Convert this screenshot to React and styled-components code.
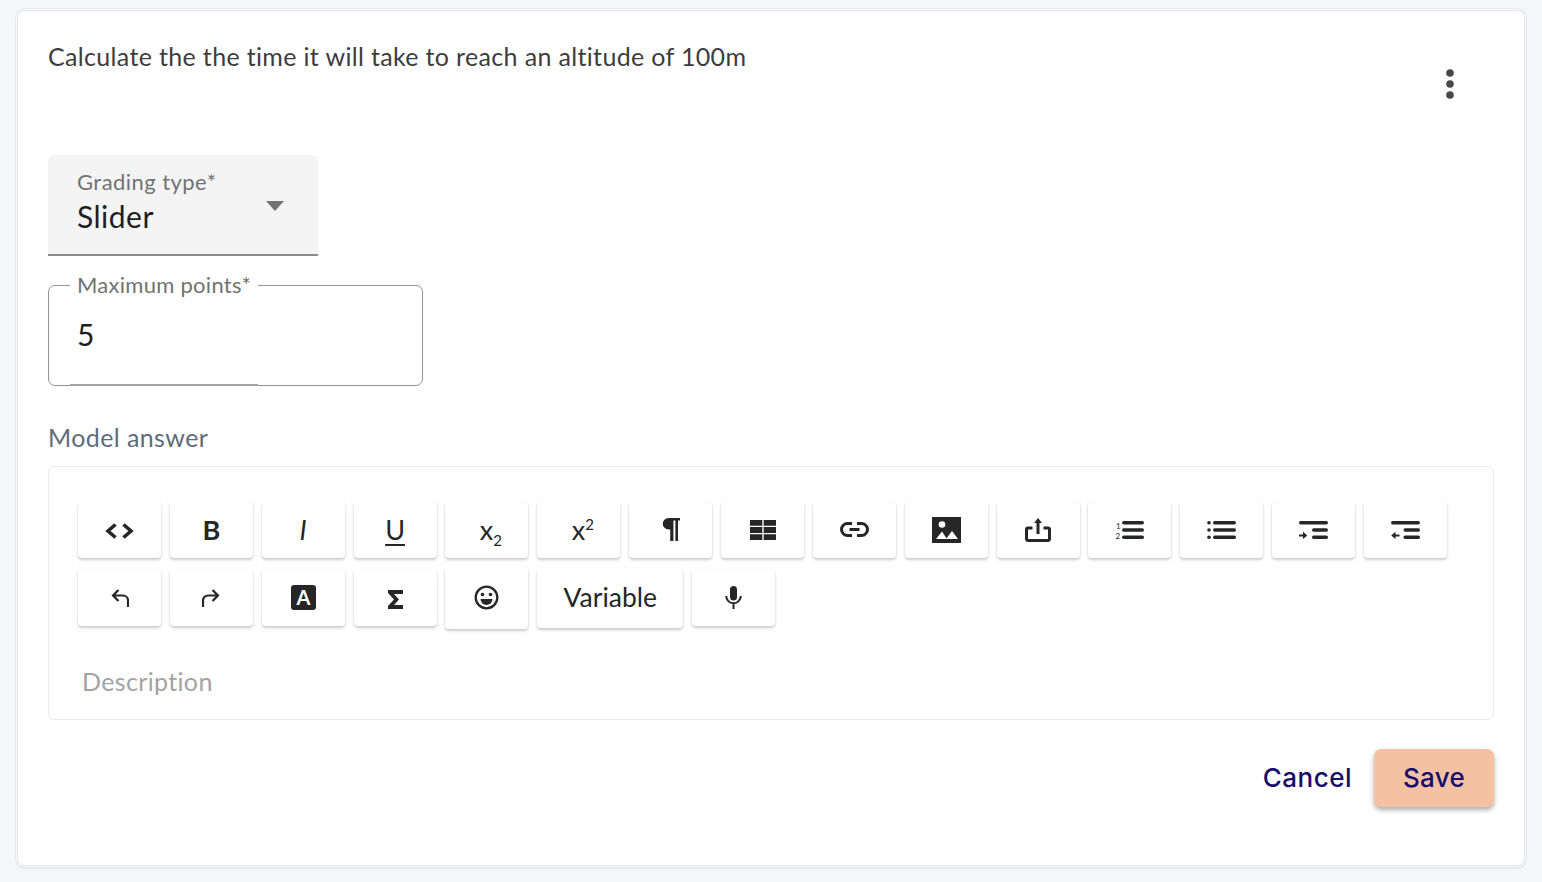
import styled, { createGlobalStyle } from "styled-components";

const GlobalStyle = createGlobalStyle`
  html, body {
    margin: 0;
    background: #f5f6f9;
    font-family: "Lato", "Noto Sans", sans-serif;
    font-variant-ligatures: none;
  }
  * {
    box-sizing: border-box;
  }
`;

const Page = styled.div`
  min-height: 100vh;
  padding: 10px 17px 16px;
`;
const Card = styled.div`
  height: 856px;
  padding: 29px 30px 0;
  background: #fff;
  border: 1px solid #e4e6ea;
  border-radius: 8px;
  box-shadow: 0 0 0 1px #f9f9fb, 0 0 0 2px #e6e8ec, 0 2px 2px 1px rgba(0, 0, 0, 0.08);
`;
const Header = styled.div`
  display: flex;
  justify-content: space-between;
  height: 115px;
`;
const Title = styled.div`
  margin-top: -2px;
  font-size: 25px;
  line-height: 36px;
  letter-spacing: 0.34px;
  color: #3d3d3d;
`;
const MenuButton = styled.button`
  width: 48px;
  height: 48px;
  margin: 20px 20px 0 0;
  padding: 0;
  display: flex;
  align-items: center;
  justify-content: center;
  background: none;
  border: none;
`;
const SelectBox = styled.div`
  position: relative;
  width: 270px;
  height: 101px;
  padding: 14px 29px 0;
  background: #f4f4f4;
  border-bottom: 2px solid #8c8c8c;
  border-radius: 6px 6px 0 0;
`;
const SelectLabel = styled.div`
  font-size: 22px;
  line-height: 26px;
  letter-spacing: 0.45px;
  color: #727272;
`;
const SelectValue = styled.div`
  margin-top: 1px;
  font-size: 30px;
  line-height: 40px;
  letter-spacing: 0.5px;
  color: #1e1e1e;
`;
const Caret = styled.span`
  position: absolute;
  top: 46px;
  right: 34px;
  width: 0;
  height: 0;
  border-left: 9.5px solid transparent;
  border-right: 9.5px solid transparent;
  border-top: 10px solid #737373;
`;
const PointsField = styled.fieldset`
  position: relative;
  width: 375px;
  height: 111px;
  margin: 19px 0 0;
  padding: 0 28px;
  border: 1px solid #939393;
  border-radius: 7px;

  &::after {
    content: "";
    position: absolute;
    left: 21px;
    bottom: -1px;
    width: 188px;
    height: 2px;
    background: #a4a4a4;
  }
`;
const PointsLegend = styled.legend`
  margin-left: -7px;
  padding: 0 7px;
  font-size: 22px;
  line-height: 20px;
  letter-spacing: 0.27px;
  color: #727272;
`;
const PointsValue = styled.div`
  margin-top: 19px;
  font-size: 30px;
  line-height: 40px;
  color: #1e1e1e;
`;
const SectionLabel = styled.div`
  margin: 36px 0 14px;
  font-size: 25px;
  line-height: 30px;
  letter-spacing: 0.4px;
  color: #5f6b7a;
`;
const Editor = styled.div`
  height: 254px;
  padding: 34px 29px 0;
  border: 1px solid #e9ebee;
  border-radius: 6px;
`;
const Toolbar = styled.div`
  display: flex;
  flex-direction: column;
  gap: 8px;
`;
const ToolRow = styled.div`
  display: flex;
  align-items: center;
  gap: 8.86px;
  height: ${(p) => p.$height}px;
`;
const ToolButton = styled.button`
  flex: none;
  width: ${(p) => p.$width || 83}px;
  height: ${(p) => p.$height || 57}px;
  padding: 0;
  display: flex;
  align-items: center;
  justify-content: center;
  background: #fff;
  border: none;
  border-radius: 4px;
  color: #262626;
  font-family: "Lato", sans-serif;
  box-shadow: 0 2px 3px rgba(0, 0, 0, 0.2), 0 0 2px rgba(0, 0, 0, 0.05);
`;
const Glyph = styled.span`
  margin-left: ${(p) => p.$shift || 0}px;
  font-size: 27px;
  line-height: 1;
  font-weight: ${(p) => (p.$bold ? 700 : 400)};
  font-style: ${(p) => (p.$italic ? "italic" : "normal")};
  text-decoration: ${(p) => (p.$underline ? "underline" : "none")};
  text-decoration-thickness: 2px;
  text-underline-offset: 4px;

  sub, sup {
    font-size: 15px;
    line-height: 0;
  }
`;
const VariableText = styled.span`
  margin-top: -2px;
  font-size: 26.5px;
`;
const Description = styled.div`
  margin: 37px 0 0 4px;
  font-size: 25px;
  line-height: 30px;
  letter-spacing: 0.35px;
  color: #a3a3a3;
`;
const Footer = styled.div`
  display: flex;
  justify-content: flex-end;
  align-items: center;
  gap: 22px;
  margin-top: 29px;
`;
const CancelButton = styled.button`
  margin-top: -2px;
  padding: 0;
  background: none;
  border: none;
  font-family: "Inter", sans-serif;
  font-size: 26px;
  font-weight: 500;
  letter-spacing: 0.5px;
  color: #170b6b;
`;
const SaveButton = styled.button`
  width: 120px;
  height: 58px;
  padding: 0 0 2px;
  background: #f4c1a3;
  border: none;
  border-radius: 7px;
  font-family: "Inter", sans-serif;
  font-size: 26px;
  font-weight: 500;
  letter-spacing: 0.3px;
  color: #170b6b;
  box-shadow: 0 3px 5px rgba(0, 0, 0, 0.32);
`;

const ink = "#262626";

const CodeIcon = () => (
  <svg width="29" height="16" viewBox="0 0 29 16" fill="none" stroke={ink} strokeWidth="3.6" style={{ marginTop: 2 }}>
    <path d="M10.500 1.500 3 8l7.500 6.500M18.500 1.500 26 8l-7.500 6.500" />
  </svg>
);
const UndoIcon = () => (
  <svg width="18" height="18" viewBox="0 0 18 18" fill="none" stroke={ink} strokeWidth="2.2">
    <path d="M7.5 1 2 6.5 7.5 12M2 6.5h10a5 5 0 0 1 5 5V18" />
  </svg>
);
const RedoIcon = () => (
  <svg width="18" height="18" viewBox="0 0 18 18" fill="none" stroke={ink} strokeWidth="2.2">
    <path d="M10.5 1 16 6.5 10.5 12M16 6.5H6a5 5 0 0 0-5 5V18" />
  </svg>
);
const FontBoxIcon = () => (
  <svg width="25" height="25" viewBox="0 0 25 25">
    <rect width="25" height="25" rx="3" fill={ink} />
    <text x="12.5" y="20" textAnchor="middle" fontFamily="Lato" fontWeight="700" fontSize="20" fill="#fff">A</text>
  </svg>
);
const SigmaIcon = () => (
  <svg width="15" height="19" viewBox="0 0 15 19" fill={ink} style={{ marginTop: 3 }}>
    <path d="M0 0h15v4H6l5 5.5L6 15h9v4H0v-3l6-6.5L0 3z" />
  </svg>
);
const SmileIcon = () => (
  <svg width="25" height="25" viewBox="0 0 25 25" fill="none">
    <circle cx="12.5" cy="12.5" r="10.8" stroke={ink} strokeWidth="2.3" />
    <circle cx="8.5" cy="9.5" r="1.8" fill={ink} />
    <circle cx="16.5" cy="9.5" r="1.8" fill={ink} />
    <path d="M6.5 14h12a6 6 0 0 1-12 0z" fill={ink} />
  </svg>
);
const MicIcon = () => (
  <svg width="17" height="23" viewBox="0 0 17 23" fill="none" stroke={ink} strokeWidth="2">
    <rect x="5" width="7" height="14.5" rx="3.5" fill={ink} stroke="none" />
    <path d="M1.2 10a7.3 7.3 0 0 0 14.6 0M8.5 17.5V23" />
  </svg>
);
const ParagraphIcon = () => (
  <svg width="18" height="23" viewBox="0 0 18 23" fill={ink}>
    <path d="M6.5 0H18v2.6h-2V23h-2.6V2.6h-2V23H8.2V11.5h-1.7a5.75 5.75 0 0 1 0-11.5z" />
  </svg>
);
const TableIcon = () => (
  <svg width="26" height="20" viewBox="0 0 26 20" fill={ink}>
    <path d="M0 0h12.3v5.7H0zM13.7 0H26v5.7H13.7zM0 7.1h12.3v5.8H0zM13.7 7.1H26v5.8H13.7zM0 14.3h12.3V20H0zM13.7 14.3H26V20H13.7z" />
  </svg>
);
const LinkIcon = () => (
  <svg width="29" height="15" viewBox="0 0 29 15" fill="none" stroke={ink} strokeWidth="3">
    <path d="M12 1.5H7.5a6 6 0 0 0 0 12H12M17 1.5h4.5a6 6 0 0 1 0 12H17M9.5 7.5h10" />
  </svg>
);
const ImageIcon = () => (
  <svg width="29" height="26" viewBox="0 0 29 26">
    <rect width="29" height="26" fill={ink} />
    <circle cx="10" cy="7.5" r="3.3" fill="#fff" />
    <path d="M4 22l6-7.5 5 7.5zM14 22l6-8 6 8z" fill="#fff" />
  </svg>
);
const ShareIcon = () => (
  <svg width="26" height="24" viewBox="0 0 26 24" fill="none" stroke={ink} strokeWidth="3">
    <path d="M7.5 10H3a1.5 1.5 0 0 0-1.5 1.5v9A2 2 0 0 0 3.5 22.500h19a2 2 0 0 0 2-2v-9A1.5 1.500 0 0 0 23 10h-4.500M13 4v12" />
    <path d="M13 0l4 5H9z" fill={ink} stroke="none" />
  </svg>
);
const Bars = ({ rows }) =>
  rows.map(([x, y, w]) => <rect key={`${x}-${y}`} x={x} y={y} width={w} height="3.4" rx="1.7" fill={ink} />);
const OrderedIcon = () => (
  <svg width="29" height="20" viewBox="0 0 29 20">
    <text x="1" y="9" fontFamily="Lato" fontSize="8" fill={ink}>1</text>
    <text x="0.500" y="19" fontFamily="Lato" fontSize="8" fill={ink}>2</text>
    <Bars rows={[[7, 1, 22], [7, 8.3, 22], [7, 15.6, 22]]} />
  </svg>
);
const BulletIcon = () => (
  <svg width="29" height="18" viewBox="0 0 29 18" fill={ink}>
    <circle cx="2" cy="1.8" r="1.8" />
    <circle cx="2" cy="9" r="1.8" />
    <circle cx="2" cy="16.200" r="1.8" />
    <Bars rows={[[6, 0, 23], [6, 7.3, 23], [6, 14.6, 23]]} />
  </svg>
);
const IndentIcon = () => (
  <svg width="29" height="18" viewBox="0 0 29 18" fill={ink}>
    <Bars rows={[[0, 0, 29], [13, 7.3, 16], [13, 14.6, 16]]} />
    <path d="M0 13.500h4V10.700l4.300 3.800-4.300 3.500v-2.500H0z" />
  </svg>
);
const OutdentIcon = () => (
  <svg width="29" height="18" viewBox="0 0 29 18" fill={ink}>
    <Bars rows={[[0, 0, 29], [12.500, 7.3, 16.500], [12.500, 14.6, 16.500]]} />
    <path d="M8.500 13.500h-4V10.700L0.200 14.500l4.300 3.500v-2.500h4z" />
  </svg>
);
const DotsIcon = () => (
  <svg width="8" height="30" viewBox="0 0 8 30" fill="#484848">
    <circle cx="4" cy="4" r="3.8" />
    <circle cx="4" cy="15" r="3.8" />
    <circle cx="4" cy="26" r="3.8" />
  </svg>
);

const App = () => {
  return (
    <Page>
      <GlobalStyle />
      <Card>
        <Header>
          <Title>Calculate the the time it will take to reach an altitude of 100m</Title>
          <MenuButton>
            <DotsIcon />
          </MenuButton>
        </Header>

        <SelectBox>
          <SelectLabel>Grading type*</SelectLabel>
          <SelectValue>Slider</SelectValue>
          <Caret />
        </SelectBox>

        <PointsField>
          <PointsLegend>Maximum points*</PointsLegend>
          <PointsValue>5</PointsValue>
        </PointsField>

        <SectionLabel>Model answer</SectionLabel>
        <Editor>
          <Toolbar>
            <ToolRow $height={57}>
              <ToolButton><CodeIcon /></ToolButton>
              <ToolButton><Glyph $bold>B</Glyph></ToolButton>
              <ToolButton><Glyph $italic>I</Glyph></ToolButton>
              <ToolButton><Glyph $underline>U</Glyph></ToolButton>
              <ToolButton><Glyph $shift={8}>x<sub>2</sub></Glyph></ToolButton>
              <ToolButton><Glyph $shift={8}>x<sup>2</sup></Glyph></ToolButton>
              <ToolButton><ParagraphIcon /></ToolButton>
              <ToolButton><TableIcon /></ToolButton>
              <ToolButton><LinkIcon /></ToolButton>
              <ToolButton><ImageIcon /></ToolButton>
              <ToolButton><ShareIcon /></ToolButton>
              <ToolButton><OrderedIcon /></ToolButton>
              <ToolButton><BulletIcon /></ToolButton>
              <ToolButton><IndentIcon /></ToolButton>
              <ToolButton><OutdentIcon /></ToolButton>
            </ToolRow>
            <ToolRow $height={63}>
              <ToolButton><UndoIcon /></ToolButton>
              <ToolButton><RedoIcon /></ToolButton>
              <ToolButton><FontBoxIcon /></ToolButton>
              <ToolButton><SigmaIcon /></ToolButton>
              <ToolButton $height={63}><SmileIcon /></ToolButton>
              <ToolButton $width={146} $height={60}><VariableText>Variable</VariableText></ToolButton>
              <ToolButton><MicIcon /></ToolButton>
            </ToolRow>
          </Toolbar>
          <Description>Description</Description>
        </Editor>

        <Footer>
          <CancelButton>Cancel</CancelButton>
          <SaveButton>Save</SaveButton>
        </Footer>
      </Card>
    </Page>
  );
};

export default App;
